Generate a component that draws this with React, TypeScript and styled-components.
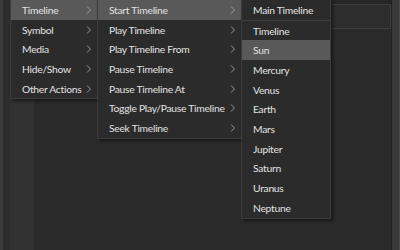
import React from "react";
import styled, { createGlobalStyle } from "styled-components";

const Global = createGlobalStyle`
  html, body { margin: 0; padding: 0; background: #2a2a2a; }
  body { width: 400px; height: 250px; overflow: hidden; font-family: Lato, "Noto Sans", sans-serif; }
`;

const Page = styled.div`
  position: relative;
  width: 400px;
  height: 250px;
  display: flex;
  background: #2a2a2a;
`;

const EdgeStrip = styled.div`
  width: 3px;
  background: #3b3b3b;
`;

const Gutter = styled.div`
  width: 7px;
  background: #2d2d2d;
`;

const Ruler = styled.div`
  width: 24px;
  background: #323232;
`;

const Main = styled.div`
  flex: 1;
  display: flex;
  flex-direction: column;
  background: #2a2a2a;
`;

const TopBar = styled.div`
  height: 4px;
  background: #262626;
`;

const HeaderRow = styled.div`
  height: 25px;
  display: flex;
  justify-content: flex-end;
`;

const HeaderBox = styled.div`
  width: 120px;
  box-sizing: border-box;
  border: 1px solid #3e3e3e;
  background: #2d2d2d;
`;

const SidePanel = styled.div`
  width: 9px;
  box-sizing: border-box;
  border-left: 1px solid #232323;
  border-right: 1px solid #4a4a4a;
  background: #393939;
`;

const Menu = styled.div<{ $left: number; $width: number }>`
  position: absolute;
  left: ${(p) => p.$left}px;
  top: 0;
  width: ${(p) => p.$width}px;
  box-sizing: border-box;
  background: #2b2b2b;
  border: 1px solid #3c3c3c;
  border-top: none;
  box-shadow: 2px 2px 3px rgba(0, 0, 0, 0.45);
  display: flex;
  flex-direction: column;
`;

const Item = styled.div<{ $active?: boolean }>`
  height: 19.7px;
  display: flex;
  align-items: center;
  padding-left: 11px;
  padding-right: 4px;
  font-size: 10.3px;
  letter-spacing: -0.27px;
  color: #e2e2e2;
  background: ${(p) => (p.$active ? "#595959" : "transparent")};
  white-space: nowrap;
`;

const Label = styled.span`
  flex: 1;
`;

const Sep = styled.div`
  height: 1px;
  background: #3e3e3e;
`;

const Chevron = () => (
  <svg width="6" height="8" viewBox="0 0 6 8" style={{ marginRight: 1 }}>
    <path d="M1 0.5 L4.5 4 L1 7.5" fill="none" stroke="#9a9a9a" strokeWidth="1" />
  </svg>
);

const menu1 = ["Timeline", "Symbol", "Media", "Hide/Show", "Other Actions"];
const menu2 = [
  "Start Timeline",
  "Play Timeline",
  "Play Timeline From",
  "Pause Timeline",
  "Pause Timeline At",
  "Toggle Play/Pause Timeline",
  "Seek Timeline",
];
const menu3 = ["Timeline", "Sun", "Mercury", "Venus", "Earth", "Mars", "Jupiter", "Saturn", "Uranus", "Neptune"];

export default function App() {
  return (
    <>
      <Global />
      <Page>
        <EdgeStrip />
        <Gutter />
        <Ruler />
        <Main>
          <TopBar />
          <HeaderRow>
            <HeaderBox />
          </HeaderRow>
        </Main>
        <SidePanel />

        <Menu $left={10} $width={88}>
          {menu1.map((t, i) => (
            <Item key={t} $active={i === 0}>
              <Label>{t}</Label>
              <Chevron />
            </Item>
          ))}
        </Menu>
        <Menu $left={97} $width={145}>
          {menu2.map((t, i) => (
            <Item key={t} $active={i === 0}>
              <Label>{t}</Label>
              <Chevron />
            </Item>
          ))}
        </Menu>
        <Menu $left={241} $width={90}>
          <Item>
            <Label>Main Timeline</Label>
          </Item>
          <Sep />
          {menu3.map((t) => (
            <Item key={t} $active={t === "Sun"}>
              <Label>{t}</Label>
            </Item>
          ))}
        </Menu>
      </Page>
    </>
  );
}
